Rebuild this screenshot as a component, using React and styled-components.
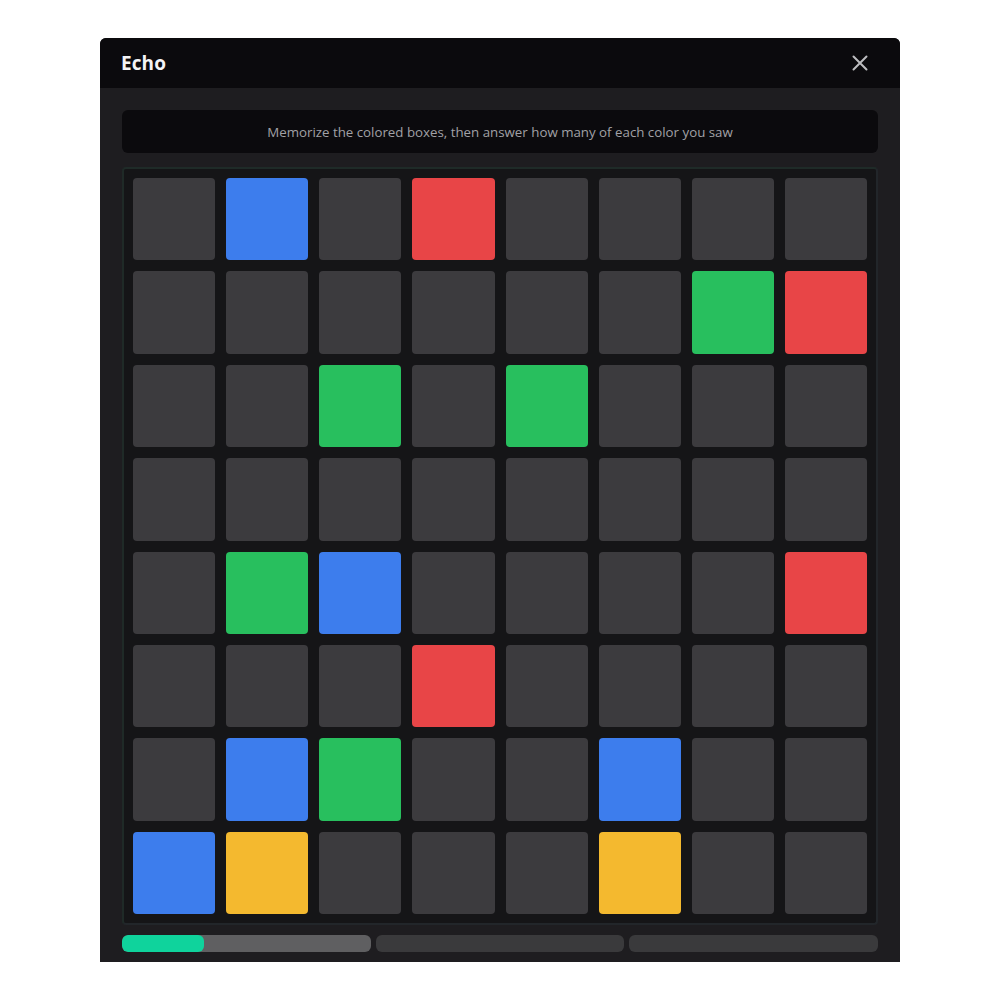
import React from "react";
import styled, { createGlobalStyle } from "styled-components";

const Global = createGlobalStyle`
  html, body { margin: 0; padding: 0; background: #ffffff; }
  body { font-family: "Open Sans", "Noto Sans", Arial, sans-serif; }
`;

const Page = styled.div`
  width: 1000px;
  height: 1000px;
  display: flex;
  justify-content: center;
  padding-top: 38px;
  box-sizing: border-box;
`;

const Window = styled.div`
  width: 800px;
  height: 924px;
  background: #1e1d20;
  border-radius: 6px 6px 0 0;
  overflow: hidden;
  display: flex;
  flex-direction: column;
`;

const Header = styled.div`
  height: 50px;
  flex: none;
  background: #0b0a0d;
  display: flex;
  align-items: center;
  justify-content: space-between;
  padding: 0 32px 0 21px;
`;

const Title = styled.div`
  color: #f4f4f5;
  font-size: 19px;
  font-weight: 700;
  letter-spacing: 0.1px;
`;

const Close = styled.button`
  background: none;
  border: 0;
  padding: 0;
  width: 16px;
  height: 16px;
  display: flex;
  color: #bdbdc0;
  cursor: pointer;
`;

const Body = styled.div`
  padding: 22px 22px 0 22px;
  display: flex;
  flex-direction: column;
`;

const Instruction = styled.div`
  height: 43px;
  border-radius: 6px;
  background: #0b0a0d;
  color: #a1a1a6;
  font-size: 13.3px;
  display: flex;
  align-items: center;
  justify-content: center;
`;

const Board = styled.div`
  margin-top: 14px;
  height: 758px;
  box-sizing: border-box;
  border: 2px solid #22262a;
  border-top-color: #1f2b28;
  border-left-color: #1f2a27;
  border-radius: 4px;
  background: #151517;
  padding: 9px;
  display: grid;
  grid-template-columns: repeat(8, 1fr);
  grid-template-rows: repeat(8, 1fr);
  gap: 11px;
`;

const COLORS = {
  _: "#3c3b3e",
  B: "#3d7ded",
  R: "#e84547",
  G: "#28bf5e",
  Y: "#f4b92f",
};

const Cell = styled.div`
  border-radius: 4px;
  background: ${(p) => COLORS[p.$c]};
`;

const Progress = styled.div`
  margin-top: 10px;
  display: grid;
  grid-template-columns: repeat(3, 1fr);
  gap: 5px;
`;

const Segment = styled.div`
  height: 17px;
  border-radius: 6px;
  background: ${(p) => (p.$active ? "#5f5f61" : "#3a3a3c")};
  overflow: hidden;
  display: flex;
`;

const Fill = styled.div`
  height: 100%;
  background: #0fd39c;
  border-radius: 6px;
`;

const GRID = [
  "_B_R____",
  "______GR",
  "__G_G___",
  "________",
  "_GB____R",
  "___R____",
  "_BG__B__",
  "BY___Y__",
];

export default function App() {
  return (
    <>
      <Global />
      <Page>
        <Window>
          <Header>
            <Title>Echo</Title>
            <Close aria-label="Close">
              <svg width="16" height="16" viewBox="0 0 16 16" fill="none" stroke="currentColor" strokeWidth="2" strokeLinecap="round">
                <path d="M1.5 1.5 L14.5 14.5 M14.5 1.5 L1.5 14.5" />
              </svg>
            </Close>
          </Header>
          <Body>
            <Instruction>Memorize the colored boxes, then answer how many of each color you saw</Instruction>
            <Board>
              {GRID.flatMap((row, r) =>
                row.split("").map((c, i) => <Cell key={`${r}-${i}`} $c={c} />)
              )}
            </Board>
            <Progress>
              <Segment $active>
                <Fill style={{ width: "33%" }} />
              </Segment>
              <Segment />
              <Segment />
            </Progress>
          </Body>
        </Window>
      </Page>
    </>
  );
}
